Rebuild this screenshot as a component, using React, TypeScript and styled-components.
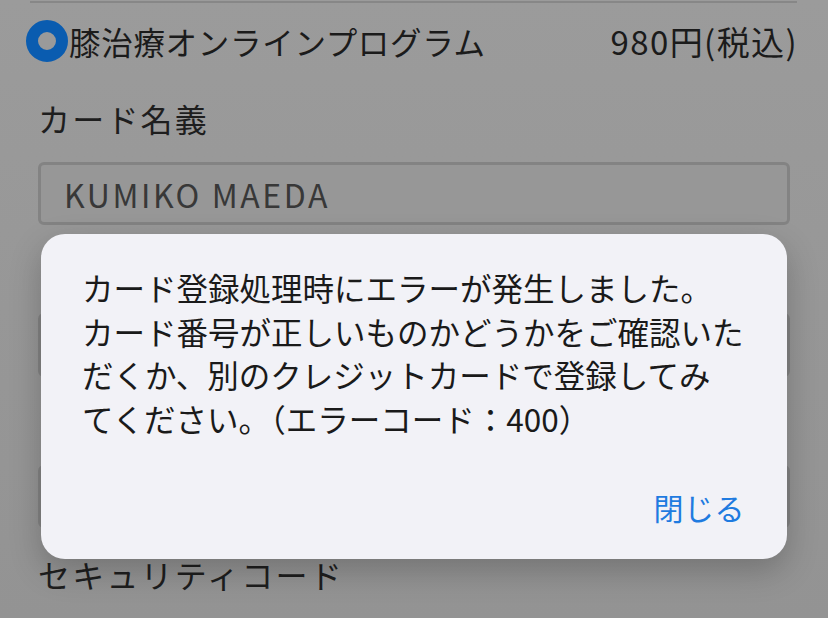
import React from "react";
import styled, { createGlobalStyle } from "styled-components";

const Global = createGlobalStyle`
  html, body { margin: 0; padding: 0; }
  body {
    width: 828px;
    height: 618px;
    overflow: hidden;
    background: #999999;
    font-family: "Noto Sans CJK JP", "Noto Sans", sans-serif;
  }
`;

const Page = styled.div`
  position: relative;
  width: 828px;
  height: 618px;
  box-sizing: border-box;
  overflow: hidden;
  padding: 1px 31px 0 26px;
  display: flex;
  flex-direction: column;
  background: linear-gradient(#9b9b9b, #939393);
`;

const Divider = styled.div`
  height: 2px;
  margin-left: 4px;
  background: #878787;
`;

const PlanRow = styled.div`
  margin-top: 17px;
  height: 42px;
  display: flex;
  align-items: center;
  color: #1b1b1b;
  font-size: 31.5px;
`;

const Radio = styled.span`
  width: 42px;
  height: 42px;
  box-sizing: border-box;
  border-radius: 50%;
  border: 12px solid #0a5cb0;
  background: #9a9a9a;
  flex: none;
`;

const PlanName = styled.span`
  margin-left: 1px;
  flex: 1;
  letter-spacing: 0.7px;
`;

const Price = styled.span`
  font-size: 33px;
  letter-spacing: 1.4px;
  margin-right: -1px;
`;

const Label = styled.div<{ $first?: boolean }>`
  margin: ${(p) => (p.$first ? "36px" : "26px")} 0 24px 12px;
  height: 40px;
  line-height: 40px;
  font-size: 32px;
  color: #1e1e1e;
  letter-spacing: 2.2px;
`;

const Input = styled.div`
  margin: 0 7px 0 12px;
  height: 66px;
  box-sizing: border-box;
  border: 3px solid #838383;
  border-radius: 6px;
  background: #979797;
  display: flex;
  align-items: center;
  padding-left: 23px;
  font-size: 32px;
  color: #383838;
  letter-spacing: 2.6px;
`;

const Dialog = styled.div`
  position: absolute;
  left: 41px;
  top: 234px;
  width: 746px;
  height: 325px;
  box-sizing: border-box;
  border-radius: 24px;
  background: #f2f2f7;
  box-shadow: 0 12px 32px rgba(0, 0, 0, 0.22);
  display: flex;
  flex-direction: column;
  padding: 32px 42px 34px 41px;
`;

const Message = styled.p`
  margin: 0;
  font-size: 31.5px;
  line-height: 43.5px;
  color: #1a1a1a;
  white-space: nowrap;
`;

const Actions = styled.div`
  margin-top: auto;
  display: flex;
  justify-content: flex-end;
`;

const CloseButton = styled.button`
  border: none;
  background: none;
  padding: 0;
  font-family: inherit;
  font-size: 30px;
  line-height: 36px;
  color: #1f7be0;
  letter-spacing: 0.5px;
  cursor: pointer;
`;

export default function App() {
  return (
    <>
      <Global />
      <Page>
        <Divider />
        <PlanRow>
          <Radio />
          <PlanName>膝治療オンラインプログラム</PlanName>
          <Price>980円(税込)</Price>
        </PlanRow>
        <Label $first>カード名義</Label>
        <Input>KUMIKO MAEDA</Input>
        <Label aria-hidden />
        <Input />
        <Label aria-hidden />
        <Input />
        <Label>セキュリティコード</Label>
      </Page>
      <Dialog role="alertdialog">
        <Message>
          カード登録処理時にエラーが発生しました。
          <br />
          カード番号が正しいものかどうかをご確認いた
          <br />
          だくか、別のクレジットカードで登録してみ
          <br />
          てください。（エラーコード：400）
        </Message>
        <Actions>
          <CloseButton>閉じる</CloseButton>
        </Actions>
      </Dialog>
    </>
  );
}
